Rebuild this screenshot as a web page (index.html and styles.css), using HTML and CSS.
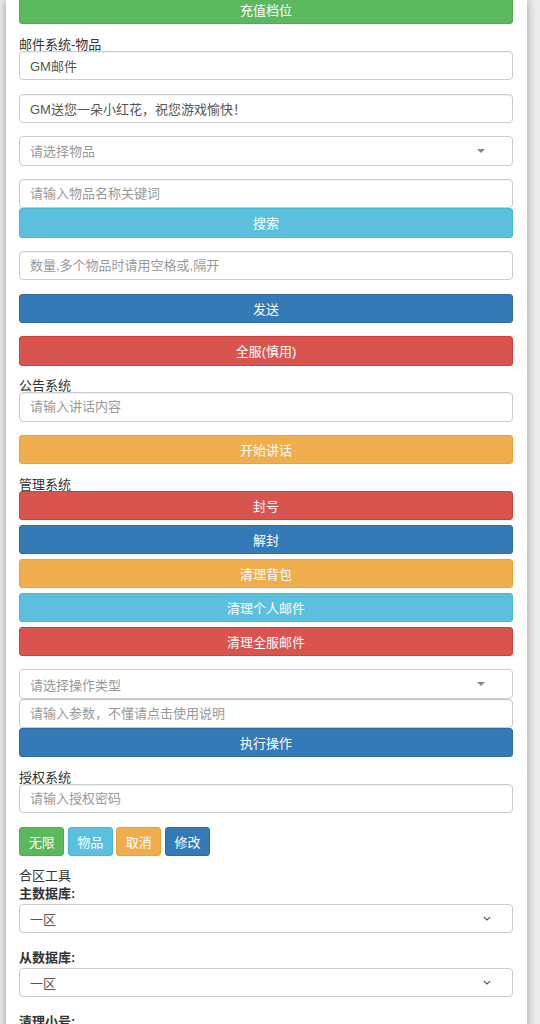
FILE: index.html
```html
<!DOCTYPE html>
<html lang="zh-CN">
<head>
<meta charset="utf-8">
<title>GM工具</title>
<link rel="stylesheet" href="styles.css">
</head>
<body>
<div class="page">
  <button class="btn btn-success btn-top gap">充值档位</button>

  <div class="label">邮件系统-物品</div>
  <input class="fc gap" type="text" value="GM邮件">
  <input class="fc gap" type="text" value="GM送您一朵小红花，祝您游戏愉快！">
  <div class="fc s2 gap"><span class="ph">请选择物品</span><span class="caret"></span></div>
  <input class="fc" type="text" placeholder="请输入物品名称关键词">
  <button class="btn btn-info gap">搜索</button>
  <input class="fc gap" type="text" placeholder="数量,多个物品时请用空格或,隔开">
  <button class="btn btn-primary gap">发送</button>
  <button class="btn btn-danger gap">全服(慎用)</button>

  <div class="label">公告系统</div>
  <input class="fc gap" type="text" placeholder="请输入讲话内容">
  <button class="btn btn-warning gap">开始讲话</button>

  <div class="label">管理系统</div>
  <div class="stack gap">
    <button class="btn btn-danger">封号</button>
    <button class="btn btn-primary">解封</button>
    <button class="btn btn-warning">清理背包</button>
    <button class="btn btn-info">清理个人邮件</button>
    <button class="btn btn-danger">清理全服邮件</button>
  </div>
  <div class="fc s2"><span class="ph">请选择操作类型</span><span class="caret"></span></div>
  <input class="fc" type="text" placeholder="请输入参数，不懂请点击使用说明">
  <button class="btn btn-primary gap">执行操作</button>

  <div class="label">授权系统</div>
  <input class="fc gap" type="text" placeholder="请输入授权密码">
  <div class="btn-row gap">
    <button class="btn btn-success btn-sm">无限</button>
    <button class="btn btn-info btn-sm">物品</button>
    <button class="btn btn-warning btn-sm">取消</button>
    <button class="btn btn-primary btn-sm">修改</button>
  </div>

  <div class="label">合区工具</div>
  <div class="label-b">主数据库:</div>
  <div class="fc sel gap"><span class="val">一区</span><svg class="chev" width="8" height="5" viewBox="0 0 8 5"><path d="M0.8 0.8 L4 4 L7.2 0.8" fill="none" stroke="#555" stroke-width="1.1"/></svg></div>
  <div class="label-b">从数据库:</div>
  <div class="fc sel gap"><span class="val">一区</span><svg class="chev" width="8" height="5" viewBox="0 0 8 5"><path d="M0.8 0.8 L4 4 L7.2 0.8" fill="none" stroke="#555" stroke-width="1.1"/></svg></div>
  <div class="label-b">清理小号:</div>
</div>
</body>
</html>
```
FILE: styles.css
```css
* { box-sizing: border-box; }
html, body { margin: 0; padding: 0; }
body {
  background: #ececec;
  font-family: "Liberation Sans", "Noto Sans CJK SC", sans-serif;
  font-size: 13px;
  color: #333;
}
.page {
  width: 521px;
  margin-left: 6px;
  min-height: 1100px;
  background: #fff;
  padding: 0 14px 0 13px;
  box-shadow: 0 0 9px rgba(0, 0, 0, 0.35);
  display: flex;
  flex-direction: column;
}
.gap { margin-bottom: 13.33px; }
.label {
  line-height: 13.33px;
  height: 13.33px;
  font-size: 13px;
  color: #333;
}
.label-b {
  line-height: 21.33px;
  font-size: 13px;
  font-weight: bold;
  color: #333;
}
.fc {
  display: flex;
  align-items: center;
  width: 100%;
  height: 29.33px;
  margin-top: 0;
  padding: 0 10px;
  border: 1px solid #ccc;
  border-radius: 4px;
  background: #fff;
  box-shadow: inset 0 1px 1px rgba(0, 0, 0, 0.06);
  font-family: "Liberation Sans", "Noto Sans CJK SC", sans-serif;
  font-size: 13px;
  color: #555;
  outline: none;
}
input.fc { display: block; }
.fc::placeholder { color: #999; opacity: 1; }
.s2 { justify-content: space-between; box-shadow: none; }
.s2 .ph { color: #999; }
.caret {
  width: 0;
  height: 0;
  margin-right: 17px;
  border-left: 4px solid transparent;
  border-right: 4px solid transparent;
  border-top: 4px solid #888;
}
.sel { justify-content: space-between; box-shadow: none; padding-right: 21px; }
.sel .val { color: #555; }
.chev { display: block; }
.btn {
  display: block;
  width: 100%;
  height: 29.33px;
  margin-left: 0;
  margin-right: 0;
  padding: 0;
  border: 1px solid transparent;
  border-radius: 3px;
  font-family: "Liberation Sans", "Noto Sans CJK SC", sans-serif;
  font-size: 13px;
  color: #fff;
  text-align: center;
  cursor: pointer;
}
.btn-top { margin-top: -5px; }
.btn-success { background: #5cb85c; border-color: #4cae4c; }
.btn-info { background: #5bc0de; border-color: #46b8da; }
.btn-primary { background: #337ab7; border-color: #2e6da4; }
.btn-danger { background: #d9534f; border-color: #d43f3a; }
.btn-warning { background: #f0ad4e; border-color: #eea236; }
.stack {
  display: flex;
  flex-direction: column;
  gap: 4.67px;
}
.btn-row {
  display: flex;
  gap: 3.3px;
}
.btn-sm {
  width: 45.3px;
}
```
